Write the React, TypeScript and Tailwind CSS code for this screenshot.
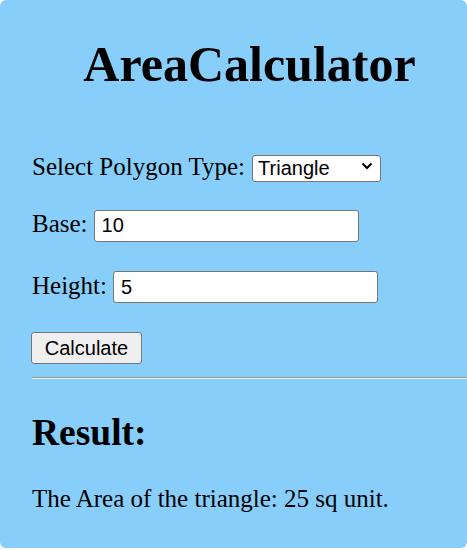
import React, { useState } from 'react';

const serif = { fontFamily: '"Liberation Serif", "Times New Roman", serif' };

const App: React.FC = () => {
  const [shape, setShape] = useState('triangle');
  const [base, setBase] = useState('10');
  const [height, setHeight] = useState('5');
  const [area, setArea] = useState<number | null>(25);

  const calculate = () => {
    const b = parseFloat(base) || 0;
    const h = parseFloat(height) || 0;
    setArea(shape === 'triangle' ? 0.5 * b * h : b * h);
  };

  return (
    <div className="h-[550px] w-[467px] bg-white">
      <div
        className="flex h-[548px] w-full flex-col rounded-md bg-[#87cefa] pl-8 text-black"
        style={serif}
      >
        <h1 className="mt-[35px] text-center text-[50px] font-bold leading-[58px]">AreaCalculator</h1>

        <div className="mt-[59px] flex items-baseline gap-[7px] text-[25px] leading-[29px]">
          <span>Select Polygon Type:</span>
          <div className="relative">
            <select
              value={shape}
              onChange={(e) => setShape(e.target.value)}
              className="h-[27px] w-[129px] appearance-none rounded-[3px] border border-[#767676] bg-white pl-[5px] font-['Liberation_Sans',Arial,sans-serif] text-[20px] leading-[23px] outline-none"
            >
              <option value="triangle">Triangle</option>
              <option value="rectangle">Rectangle</option>
            </select>
            <svg
              className="pointer-events-none absolute right-[8px] top-[10px]"
              width="12"
              height="8"
              viewBox="0 0 12 8"
              fill="none"
            >
              <polyline points="1.5,1.5 6,6 10.5,1.5" stroke="#000" strokeWidth="2" />
            </svg>
          </div>
        </div>

        <div className="mt-[27px] flex items-baseline gap-[6px] text-[25px] leading-[29px]">
          <span>Base:</span>
          <input
            value={base}
            onChange={(e) => setBase(e.target.value)}
            className="h-[32px] w-[265px] rounded-[3px] border border-[#767676] bg-white px-[7px] font-['Liberation_Sans',Arial,sans-serif] text-[20px] outline-none"
          />
        </div>

        <div className="mt-[29px] flex items-baseline gap-[6px] text-[25px] leading-[29px]">
          <span>Height:</span>
          <input
            value={height}
            onChange={(e) => setHeight(e.target.value)}
            className="h-[32px] w-[265px] rounded-[3px] border border-[#767676] bg-white px-[7px] font-['Liberation_Sans',Arial,sans-serif] text-[20px] outline-none"
          />
        </div>

        <div className="mt-[29px]">
          <button
            onClick={calculate}
            className="-ml-px h-[32px] w-[111px] rounded-[3px] border border-[#767676] bg-[#efefef] font-['Liberation_Sans',Arial,sans-serif] text-[20px] leading-[23px]"
          >
            Calculate
          </button>
        </div>

        <div className="mt-[13px] h-px w-full bg-[#9a9a9a]" />
        <div className="h-px w-full bg-[#f0f0f0]" />

        <h2 className="mt-[32px] text-[37.5px] font-bold leading-[43px]">Result:</h2>

        {area !== null && (
          <p className="mt-[30px] text-[25px] leading-[29px]">
            The Area of the {shape}: {area} sq unit.
          </p>
        )}
      </div>
    </div>
  );
};

export default App;
